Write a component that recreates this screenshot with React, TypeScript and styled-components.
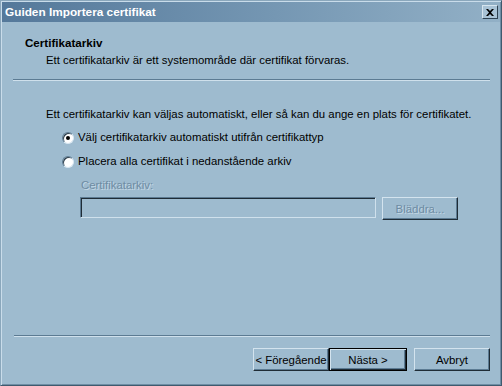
import styled, { createGlobalStyle } from 'styled-components';

const GlobalStyle = createGlobalStyle`
  html, body {
    margin: 0;
    padding: 0;
    background: #9ebbcf;
  }
  * {
    box-sizing: border-box;
  }
`;

const Window = styled.div`
  width: 502px;
  height: 386px;
  display: flex;
  flex-direction: column;
  background: #9ebbcf;
  border-left: 1px solid #8aa7bc;
  border-top: 1px solid #8aa7bc;
  border-right: 1px solid #3f5a6e;
  border-bottom: 1px solid #3f5a6e;
  box-shadow: inset 1px 1px 0 #c9dcea, inset -1px -1px 0 #6f8ea5;
  font-family: Tahoma, 'Liberation Sans', Arial, sans-serif;
  font-size: 11.4px;
  line-height: 13px;
  color: #000;
`;

const TitleBar = styled.div`
  height: 20px;
  margin: 1px 1px 0 1px;
  display: flex;
  align-items: center;
  justify-content: space-between;
  padding: 0 2px 0 3px;
  background: linear-gradient(to right, #54789a 0%, #7597b3 55%, #92b0c6 100%);

  p {
    margin: 0;
    color: #fff;
    font-weight: bold;
    font-size: 11.8px;
  }
`;

const CloseBtn = styled.div`
  width: 16px;
  height: 14px;
  display: flex;
  align-items: center;
  justify-content: center;
  background: #a8c2d5;
  border-top: 1px solid #d6e5ef;
  border-left: 1px solid #d6e5ef;
  border-right: 1px solid #2e4252;
  border-bottom: 1px solid #2e4252;
`;

const Header = styled.div`
  height: 57px;
  padding: 14px 0 0 24px;

  h1 {
    margin: 0;
    font-size: 11.6px;
    font-weight: bold;
    line-height: 13px;
  }

  p {
    margin: 5px 0 0 21px;
  }
`;

interface SepProps {
  $inset?: boolean;
}

const Separator = styled.div<SepProps>`
  height: 2px;
  margin: ${p => (p.$inset ? '0 11px 0 13px' : '0 11px 0 12px')};
  border-top: 1px solid #5c7b93;
  border-bottom: 1px solid #cfe0ec;
`;

const Content = styled.div`
  flex: 1;
  padding: 27px 0 0 45px;
  display: flex;
  flex-direction: column;

  > p {
    margin: 0;
  }
`;

const Options = styled.div`
  display: flex;
  flex-direction: column;
  gap: 11px;
  margin: 10px 0 0 16px;
`;

const RadioRow = styled.label`
  display: flex;
  align-items: center;
  gap: 4px;
  height: 13px;
`;

interface RadioProps {
  $checked?: boolean;
}

const Radio = styled.span<RadioProps>`
  width: 12px;
  height: 12px;
  border-radius: 50%;
  background: #fff;
  border: 1px solid;
  border-color: #5d7b92 #d9e7f1 #d9e7f1 #5d7b92;
  box-shadow: inset 1px 1px 0 #2c3d4a;
  display: flex;
  align-items: center;
  justify-content: center;

  &::after {
    content: '';
    width: 4px;
    height: 4px;
    border-radius: 50%;
    background: ${p => (p.$checked ? '#000' : 'transparent')};
  }
`;

const FieldLabel = styled.div`
  margin: 11px 0 0 35px;
  color: #6e8ca3;
  text-shadow: 1px 1px 0 #c3d7e5;
`;

const FieldRow = styled.div`
  display: flex;
  gap: 6px;
  margin: 5px 0 0 34px;
`;

const TextBox = styled.div`
  width: 296px;
  height: 21px;
  background: #9ebbcf;
  border: 1px solid;
  border-color: #5c7b93 #cfe0ec #cfe0ec #5c7b93;
  box-shadow: inset 1px 1px 0 #1f2c36;
`;

interface BtnProps {
  $default?: boolean;
}

const Button = styled.button<BtnProps>`
  width: ${p => (p.$default ? '78px' : '76px')};
  height: 23px;
  padding: 0;
  font-family: inherit;
  font-size: 11.4px;
  background: #9ebbcf;
  color: #000;
  border: 1px solid;
  border-color: ${p =>
    p.$default ? '#000' : '#d3e3ee #1f2c36 #1f2c36 #d3e3ee'};
  box-shadow: ${p =>
    p.$default
      ? 'inset 1px 1px 0 #d3e3ee, inset -1px -1px 0 #1f2c36, inset -2px -2px 0 #5c7b93'
      : 'inset -1px -1px 0 #5c7b93'};

  &:disabled {
    color: #6e8ca3;
    text-shadow: 1px 1px 0 #c3d7e5;
  }
`;

const Footer = styled.div`
  display: flex;
  justify-content: flex-end;
  align-items: flex-start;
  padding: 11px 11px 13px 0;
  height: 48px;

  ${Button}:nth-child(3) {
    margin-left: 7px;
  }
`;

const App = () => {
  return (
    <>
      <GlobalStyle />
      <Window>
        <TitleBar>
          <p>Guiden Importera certifikat</p>
          <CloseBtn>
            <svg width="8" height="7" viewBox="0 0 8 7">
              <path d="M0 0 L2 0 L4 2 L6 0 L8 0 L5 3.5 L8 7 L6 7 L4 5 L2 7 L0 7 L3 3.5 Z" fill="#000" />
            </svg>
          </CloseBtn>
        </TitleBar>
        <Header>
          <h1>Certifikatarkiv</h1>
          <p>Ett certifikatarkiv är ett systemområde där certifikat förvaras.</p>
        </Header>
        <Separator />
        <Content>
          <p>
            Ett certifikatarkiv kan väljas automatiskt, eller så kan du ange en plats för certifikatet.
          </p>
          <Options>
            <RadioRow>
              <Radio $checked />
              Välj certifikatarkiv automatiskt utifrån certifikattyp
            </RadioRow>
            <RadioRow>
              <Radio />
              Placera alla certifikat i nedanstående arkiv
            </RadioRow>
          </Options>
          <FieldLabel>Certifikatarkiv:</FieldLabel>
          <FieldRow>
            <TextBox />
            <Button disabled>Bläddra...</Button>
          </FieldRow>
        </Content>
        <Separator $inset />
        <Footer>
          <Button>&lt; Föregående</Button>
          <Button $default>Nästa &gt;</Button>
          <Button>Avbryt</Button>
        </Footer>
      </Window>
    </>
  );
};

export default App;
